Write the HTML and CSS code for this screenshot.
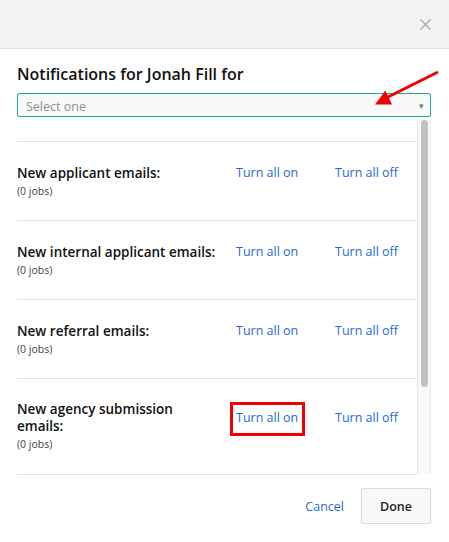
FILE: index.html
```html
<!DOCTYPE html>
<html lang="en">
<head>
  <meta charset="UTF-8">
  <meta name="viewport" content="width=device-width, initial-scale=1.0">
  <title>Notification settings</title>
  <link rel="stylesheet" href="styles.css">
</head>
<body>
  <div class="modal">
    <div class="modal-header">
      <button class="close" type="button" aria-label="Close">
        <svg width="11" height="11" viewBox="0 0 11 11"><path d="M0.5 0.5 L10.5 10.5 M10.5 0.5 L0.5 10.5" stroke="#a9a9a9" stroke-width="1.3" fill="none"/></svg>
      </button>
    </div>

    <div class="modal-body">
      <h2 class="title">Notifications for Jonah Fill for</h2>
      <div class="select">
        <span class="placeholder">Select one</span>
        <span class="caret">&#9662;</span>
      </div>

      <div class="list-wrap">
        <div class="list">
          <div class="row">
            <div class="row-head">
              <span class="label">New applicant emails:</span>
              <a href="#" class="link">Turn all on</a>
              <a href="#" class="link">Turn all off</a>
            </div>
            <div class="jobs">(0 jobs)</div>
          </div>
          <div class="row">
            <div class="row-head">
              <span class="label">New internal applicant emails:</span>
              <a href="#" class="link">Turn all on</a>
              <a href="#" class="link">Turn all off</a>
            </div>
            <div class="jobs">(0 jobs)</div>
          </div>
          <div class="row">
            <div class="row-head">
              <span class="label">New referral emails:</span>
              <a href="#" class="link">Turn all on</a>
              <a href="#" class="link">Turn all off</a>
            </div>
            <div class="jobs">(0 jobs)</div>
          </div>
          <div class="row">
            <div class="row-head">
              <span class="label">New agency submission emails:</span>
              <a href="#" class="link marked">Turn all on</a>
              <a href="#" class="link">Turn all off</a>
            </div>
            <div class="jobs">(0 jobs)</div>
          </div>
        </div>
        <div class="scrollbar"><div class="thumb"></div></div>
      </div>
    </div>

    <div class="modal-footer">
      <a href="#" class="cancel">Cancel</a>
      <button type="button" class="done">Done</button>
    </div>
  </div>

  <!-- annotation arrow drawn over the screenshot -->
  <svg class="annotation" width="449" height="542" viewBox="0 0 449 542">
    <line x1="438" y1="72" x2="386" y2="98" stroke="#f00000" stroke-width="3"/>
    <polygon points="375,104.5 385.5,90.5 392,104.5" fill="#f00000"/>
  </svg>
</body>
</html>
```

FILE: styles.css
```css
body {
  margin: 0;
  font-family: "Open Sans", Arial, sans-serif;
  color: #222;
  background: #fff;
}
.modal {
  width: 449px;
  height: 542px;
  background: #fff;
}
.modal-header {
  height: 48px;
  background: #f2f2f2;
  border-bottom: 1px solid #dedede;
  display: flex;
  justify-content: flex-end;
  align-items: center;
}
.close {
  background: none;
  border: none;
  padding: 0;
  margin-right: 18px;
  width: 11px;
  height: 11px;
  display: flex;
}
.modal-body {
  padding: 0 18px 0 17px;
}
.title {
  margin: 13px 0 7px;
  font-size: 16px;
  line-height: 24px;
  font-weight: 600;
  color: #111;
}
.select {
  height: 22px;
  border: 1px solid #21a99b;
  border-radius: 2px;
  background: #f9f9f9;
  display: flex;
  align-items: center;
  justify-content: space-between;
  padding: 0 6px 0 8px;
}
.placeholder {
  font-size: 12.5px;
  color: #8f8f8f;
  padding-top: 2px;
}
.caret {
  font-size: 9px;
  color: #777;
}
.list-wrap {
  display: flex;
  align-items: flex-start;
}
.list {
  flex: 1;
  height: 358px;
  overflow: hidden;
  padding-top: 24px;
  box-sizing: border-box;
  border-bottom: 1px solid #e2e2e2;
}
.scrollbar {
  width: 14px;
  height: 357px;
  box-sizing: border-box;
  background: #f9f9f9;
  border-left: 1px solid #e6e6e6;
  border-right: 1px solid #ececec;
  padding: 3px 2px 0 3px;
}
.thumb {
  height: 267px;
  background: #c1c1c1;
  border-radius: 4px;
}
.row {
  border-top: 1px solid #e2e2e2;
  padding: 22px 0 20px;
}
.row-head {
  display: grid;
  grid-template-columns: 219px 99px auto;
  align-items: center;
}
.label {
  font-size: 13.5px;
  line-height: 17px;
  font-weight: 600;
  color: #111;
  padding-right: 14px;
}
.link {
  font-size: 12.5px;
  line-height: 18px;
  color: #1f6ad3;
  text-decoration: none;
}
.marked {
  position: relative;
  justify-self: start;
}
.marked::after {
  content: "";
  position: absolute;
  top: -7px;
  bottom: -9px;
  left: -6px;
  right: -7px;
  border: 3px solid #f00000;
}
.jobs {
  font-size: 10.5px;
  line-height: 18px;
  color: #444;
}
.modal-footer {
  display: flex;
  justify-content: flex-end;
  align-items: center;
  gap: 17px;
  padding: 13px 18px 0 0;
}
.cancel {
  font-size: 12.5px;
  color: #1f6ad3;
  text-decoration: none;
}
.done {
  width: 70px;
  height: 36px;
  border: 1px solid #dadada;
  border-radius: 2px;
  background: #f9f9f9;
  font-family: "Open Sans", Arial, sans-serif;
  font-size: 12.5px;
  font-weight: 600;
  color: #222;
}
.annotation {
  position: absolute;
  top: 0;
  left: 0;
  pointer-events: none;
}
```
